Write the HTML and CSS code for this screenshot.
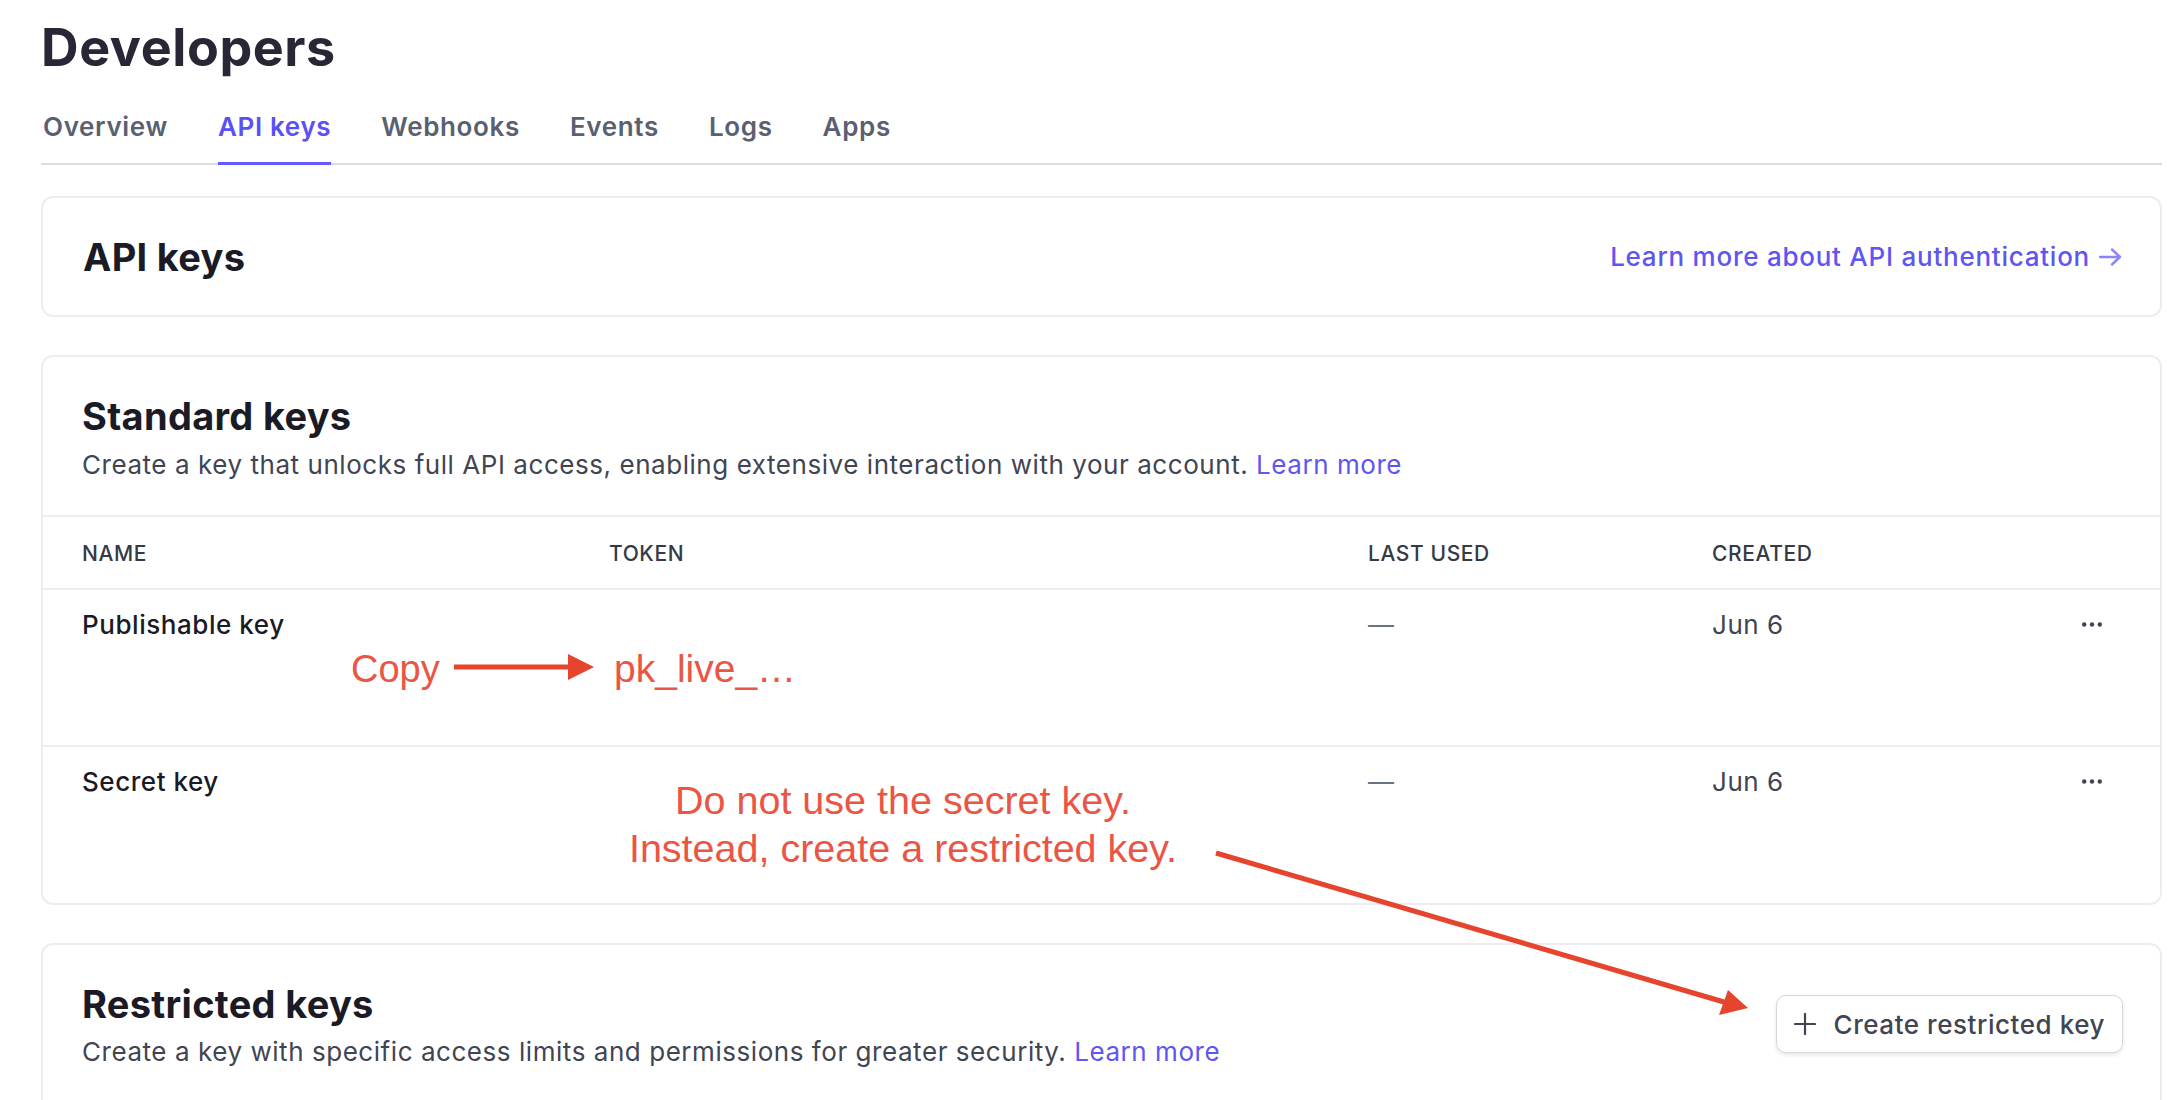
FILE: index.html
```html
<!DOCTYPE html>
<html lang="en">
<head>
    <meta charset="UTF-8">
    <meta name="viewport" content="width=device-width, initial-scale=1.0">
    <title>Developers - API keys</title>
    <link rel="stylesheet" href="styles.css">
</head>
<body>
    <div class="page">
        <h1 class="page-title">Developers</h1>

        <nav class="tabs">
            <a class="tab">Overview</a>
            <a class="tab active">API keys</a>
            <a class="tab">Webhooks</a>
            <a class="tab">Events</a>
            <a class="tab">Logs</a>
            <a class="tab">Apps</a>
        </nav>

        <section class="card card-intro">
            <h2 class="card-title">API keys</h2>
            <a class="doc-link">Learn more about API authentication
                <svg class="doc-arrow" width="23" height="18" viewBox="0 0 23 18"><path d="M1 9h20M13 1.5L21 9l-8 7.5" fill="none" stroke="currentColor" stroke-width="2.4" stroke-linecap="round" stroke-linejoin="round"/></svg>
            </a>
        </section>

        <section class="card">
            <div class="card-head">
                <div>
                    <h2 class="card-title">Standard keys</h2>
                    <p class="card-desc">Create a key that unlocks full API access, enabling extensive interaction with your account. <a class="link">Learn more</a></p>
                </div>
            </div>
            <div class="keys-table">
                <div class="keys-row keys-header">
                    <div>Name</div>
                    <div>Token</div>
                    <div>Last used</div>
                    <div>Created</div>
                    <div></div>
                </div>
                <div class="keys-row">
                    <div class="key-name">Publishable key</div>
                    <div></div>
                    <div class="empty">&mdash;</div>
                    <div class="date">Jun 6</div>
                    <div class="more">
                        <svg width="20" height="5" viewBox="0 0 20 5"><circle cx="2.2" cy="2.5" r="2.2"/><circle cx="10" cy="2.5" r="2.2"/><circle cx="17.8" cy="2.5" r="2.2"/></svg>
                    </div>
                </div>
                <div class="keys-row">
                    <div class="key-name">Secret key</div>
                    <div></div>
                    <div class="empty">&mdash;</div>
                    <div class="date">Jun 6</div>
                    <div class="more">
                        <svg width="20" height="5" viewBox="0 0 20 5"><circle cx="2.2" cy="2.5" r="2.2"/><circle cx="10" cy="2.5" r="2.2"/><circle cx="17.8" cy="2.5" r="2.2"/></svg>
                    </div>
                </div>
            </div>
        </section>

        <section class="card card-last">
            <div class="card-head">
                <div>
                    <h2 class="card-title">Restricted keys</h2>
                    <p class="card-desc">Create a key with specific access limits and permissions for greater security. <a class="link">Learn more</a></p>
                </div>
                <button class="btn-create">
                    <svg width="22" height="22" viewBox="0 0 22 22"><path d="M11 1v20M1 11h20" stroke="currentColor" stroke-width="2.2" stroke-linecap="round"/></svg>
                    Create restricted key
                </button>
            </div>
        </section>

        <!-- red annotations drawn over the screenshot -->
        <div class="note note-copy">Copy</div>
        <div class="note note-token">pk_live_&hellip;</div>
        <div class="note note-warning">Do not use the secret key.<br>Instead, create a restricted key.</div>
        <svg class="note-arrows" width="2184" height="1100" viewBox="0 0 2184 1100">
            <line x1="454" y1="667" x2="570" y2="667" stroke="#e6442c" stroke-width="5"/>
            <polygon points="568,654 594,667 568,680" fill="#e6442c"/>
            <line x1="1216" y1="853" x2="1724" y2="1002" stroke="#e6442c" stroke-width="5"/>
            <polygon points="1719,1015 1748,1008 1728,990" fill="#e6442c"/>
        </svg>
    </div>
</body>
</html>
```

FILE: styles.css
```css
html, body {
    margin: 0;
    padding: 0;
    background-color: white;
    overflow: hidden;
}
body {
    font-family: Inter, 'Noto Sans', sans-serif;
    color: #1a1b25;
}
.page {
    position: relative;
    padding: 17px 22px 0 41px;
}
.page-title {
    margin: 0;
    font-size: 52px;
    line-height: 1.2;
    font-weight: 700;
    color: #272735;
    letter-spacing: 0.6px;
}
.tabs {
    display: flex;
    gap: 50px;
    margin-top: 32px;
    padding-left: 2px;
    border-bottom: 2px solid #d8dde4;
}
.tab {
    font-size: 26px;
    line-height: 1.2;
    font-weight: 600;
    letter-spacing: 0.65px;
    color: #596171;
    padding-bottom: 19px;
    border-bottom: 3px solid transparent;
    margin-bottom: -2px;
    cursor: pointer;
}
.tab.active {
    color: #5b50f5;
    border-bottom-color: #635bff;
}
.card {
    border: 2px solid #ebedf1;
    border-radius: 12px;
    margin-top: 38px;
}
.card-intro {
    margin-top: 31px;
    display: flex;
    justify-content: space-between;
    align-items: center;
    padding: 37px 38px 35px 40px;
}
.card-title {
    margin: 0;
    font-size: 38px;
    line-height: 1.2;
    font-weight: 700;
    color: #1a1b25;
    letter-spacing: 0.3px;
}
.doc-link {
    display: flex;
    align-items: center;
    gap: 9px;
    font-size: 26px;
    line-height: 1.4;
    font-weight: 500;
    letter-spacing: 0.75px;
    color: #5e55f2;
    cursor: pointer;
}
.doc-arrow {
    color: #8c84fb;
}
.card-head {
    display: flex;
    justify-content: space-between;
    align-items: center;
    padding: 37px 37px 32px 39px;
}
.card-desc {
    margin: 7px 0 0;
    font-size: 26px;
    line-height: 36px;
    letter-spacing: 0.55px;
    color: #414552;
}
.link {
    color: #5e55f2;
    cursor: pointer;
}
.keys-row {
    display: grid;
    grid-template-columns: 527px 759px 344px 1fr 40px;
    padding: 17px 38px 0 39px;
    height: 157px;
    box-sizing: border-box;
    border-top: 2px solid #ebeef1;
    font-size: 26px;
    line-height: 36.4px;
    letter-spacing: 0.55px;
}
.keys-row:last-child {
    height: 158px;
}
.keys-header {
    height: 73px;
    padding-top: 24px;
    font-size: 21px;
    line-height: 25px;
    font-weight: 500;
    text-transform: uppercase;
    letter-spacing: 0.6px;
    color: #353a44;
}
.key-name {
    font-weight: 500;
    color: #1a1b25;
}
.empty {
    color: #687385;
}
.date {
    color: #414552;
}
.more {
    display: flex;
    align-items: center;
    height: 36.4px;
    fill: #414552;
}
.card-last {
    height: 300px;
}
.btn-create {
    display: flex;
    align-items: center;
    gap: 18px;
    height: 58px;
    padding: 0 17px;
    margin-top: -4px;
    border: 1.5px solid #d5d9df;
    border-radius: 10px;
    background-color: white;
    box-shadow: 0 2px 4px rgba(0,0,0,0.1);
    font-family: Inter, 'Noto Sans', sans-serif;
    font-size: 26px;
    font-weight: 500;
    letter-spacing: 0.55px;
    color: #414552;
    cursor: pointer;
}
.note {
    position: absolute;
    font-family: 'Liberation Sans', Arial, sans-serif;
    color: #ea5544;
    font-size: 38px;
    line-height: 38px;
    white-space: nowrap;
}
.note-copy {
    left: 351px;
    top: 650px;
}
.note-token {
    left: 614px;
    top: 650px;
    font-size: 39px;
}
.note-warning {
    left: 603px;
    top: 776px;
    width: 600px;
    text-align: center;
    font-size: 39.5px;
    line-height: 48px;
}
.note-arrows {
    position: absolute;
    left: 0;
    top: 0;
    pointer-events: none;
}
```
